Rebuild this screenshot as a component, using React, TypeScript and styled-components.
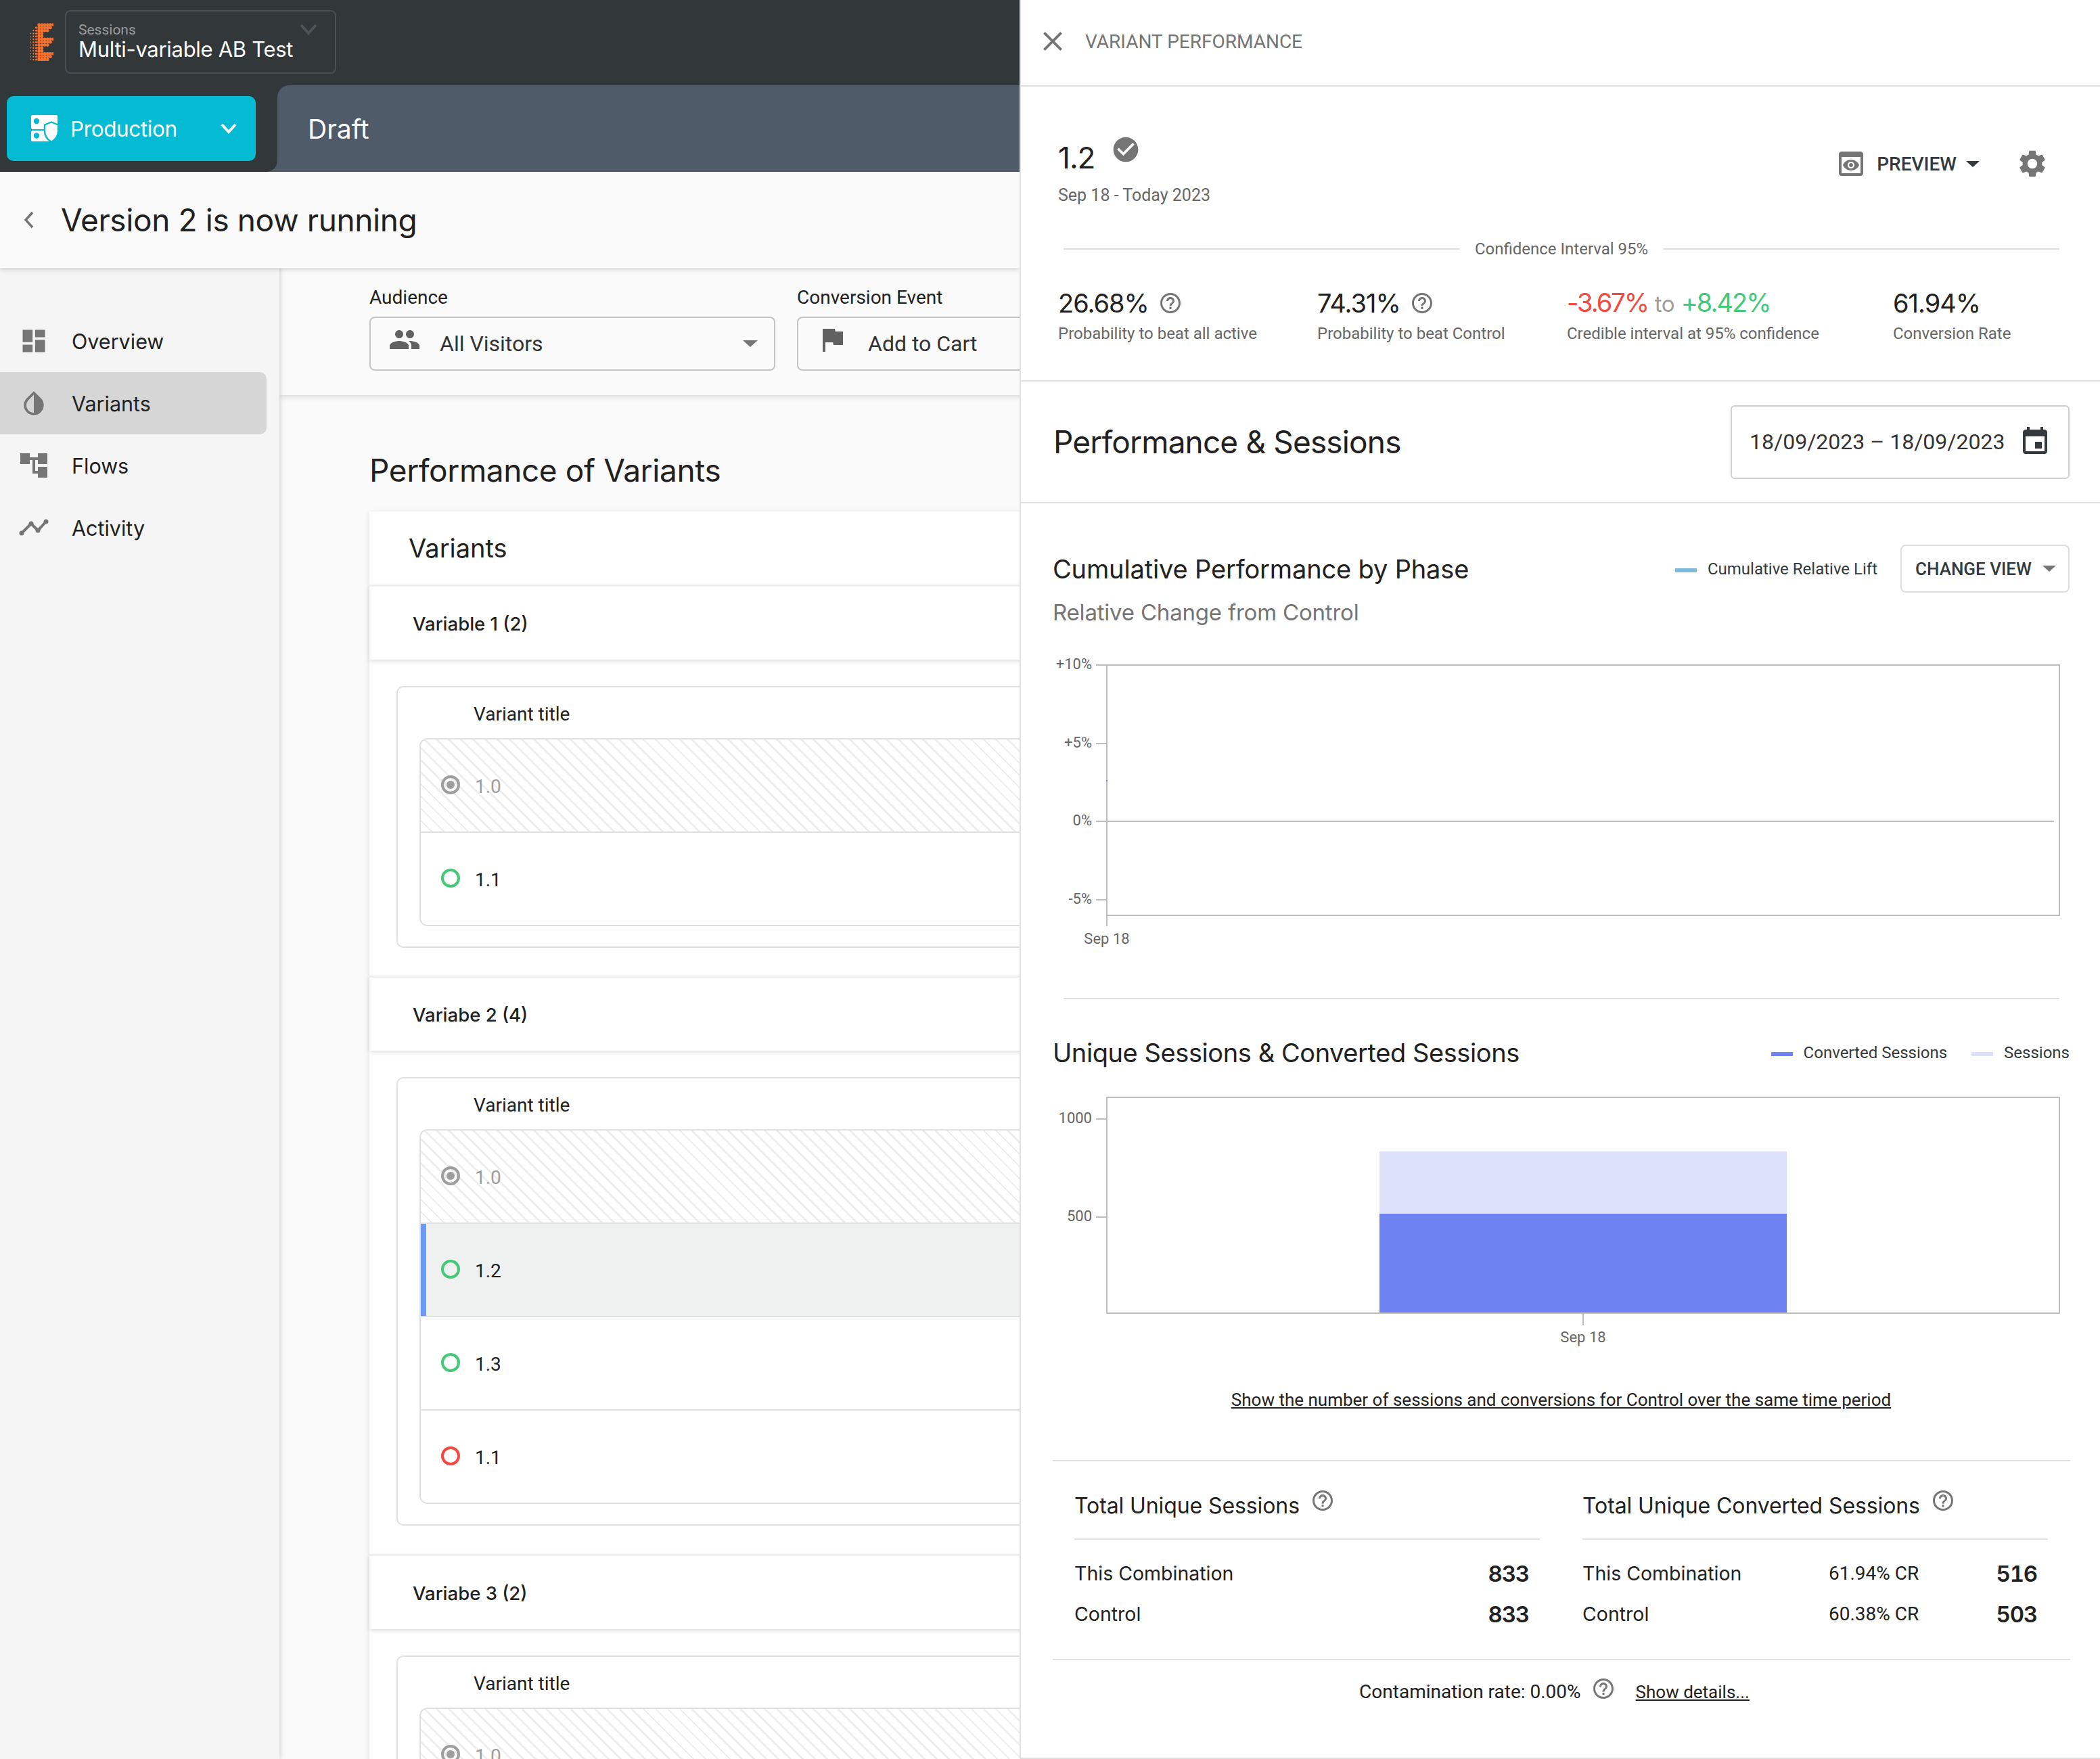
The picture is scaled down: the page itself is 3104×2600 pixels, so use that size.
import React from "react";
import styled, { createGlobalStyle } from "styled-components";

const ROBOTO = `Roboto, "Liberation Sans", sans-serif`;
const HEAD = `Inter, "Noto Sans", sans-serif`;

const Global = createGlobalStyle`
  html, body { margin: 0; padding: 0; background: #fff; }
  #root { width: 3104px; height: 2600px; overflow: hidden; }
  * { box-sizing: border-box; }
`;

const Page = styled.div`
  display: flex; width: 3104px; height: 2600px; overflow: hidden; font-family: ${ROBOTO}; color: #212121;
`;
const LeftColumn = styled.div`
  width: 1507px; flex: none; display: flex; flex-direction: column; overflow: hidden; background: #fafafa;
`;
const TopBar = styled.header`
  height: 126px; flex: none; background: #32373a; display: flex; align-items: flex-start; padding: 15px 0 0 44px; gap: 17px;
`;
const LogoSvg = styled.svg`
  width: 35px; height: 56px; margin-top: 19px; flex: none;
`;
const SessionBox = styled.div`
  width: 401px; height: 94px; border: 2px solid #4a4f53; border-radius: 8px; padding: 15px 18px 0; position: relative;
  display: flex; flex-direction: column;
`;
const SessionLabel = styled.span`
  font-size: 21px; line-height: 24px; color: #9a9da0;
`;
const SessionName = styled.span`
  font-family: ${HEAD}; font-size: 31px; line-height: 34px; color: #fff; letter-spacing: -0.3px; white-space: nowrap;
`;
const SessionChevron = styled.svg`
  position: absolute; right: 26px; top: 17px; width: 26px; height: 18px;
`;
const TabRow = styled.div`
  height: 128px; flex: none; display: flex; background: #32373a;
`;
const ProductionWrap = styled.div`
  width: 410px; flex: none; padding: 16px 32px 16px 10px;
`;
const ProductionButton = styled.div`
  height: 96px; width: 368px; background: #04bbd3; border-radius: 10px; display: flex; align-items: center; padding: 0 27px 0 36px; color: #fff;
`;
const ProductionLabel = styled.span`
  font-family: ${HEAD}; font-size: 31.5px; margin-left: 18px; flex: 1; letter-spacing: -0.4px;
`;
const DraftTab = styled.div`
  flex: 1; background: #4f5b69; border-top-left-radius: 18px; position: relative; display: flex; align-items: center; padding-left: 45px;
  font-family: ${HEAD}; font-size: 39px; color: #fff;
  &::before {
    content: ""; position: absolute; left: -16px; bottom: 0; width: 16px; height: 16px;
    background: radial-gradient(circle at 0 0, transparent 15.5px, #4f5b69 16px);
  }
`;
const SubHeader = styled.div`
  height: 142px; flex: none; background: #fafafa; display: flex; align-items: center; padding-left: 32px; gap: 38px;
  box-shadow: 0 3px 7px rgba(0,0,0,.13); position: relative; z-index: 3;
`;
const PageTitle = styled.h1`
  margin: 0; font-family: ${HEAD}; font-weight: 400; font-size: 46px; letter-spacing: -0.4px; color: #212121; white-space: nowrap;
`;
const Content = styled.div`
  flex: 1; display: flex; min-height: 0;
`;
const Sidebar = styled.nav`
  width: 413px; flex: none; background: #f5f5f5; padding-top: 62px; padding-right: 19px;
  box-shadow: 2px 0 6px rgba(0,0,0,.14); position: relative; z-index: 2;
`;
const NavItem = styled.div<{ $active?: boolean }>`
  height: 92px; display: flex; align-items: center; padding-left: 28px; gap: 34px;
  background: ${p => (p.$active ? "#d6d6d6" : "transparent")};
  border-radius: 0 10px 10px 0;
  font-family: ${HEAD}; font-size: 30.5px; color: #212121;
`;
const NavIcon = styled.span`
  width: 44px; height: 44px; display: flex; align-items: center; justify-content: center; flex: none; color: #757575;
`;
const Main = styled.main`
  flex: 1; min-width: 0; overflow: hidden; background: #fafafa;
`;
const FilterBar = styled.div`
  height: 188px; background: #fafafa; display: flex; gap: 32px; padding: 27px 0 0 133px;
  box-shadow: 0 3px 7px rgba(0,0,0,.12); width: 1200px;
`;
const FilterField = styled.div<{ $w: number }>`
  width: ${p => p.$w}px; flex: none;
`;
const FieldLabel = styled.div`
  font-size: 28px; line-height: 34px; color: #212121; margin-bottom: 11px;
`;
const Select = styled.div`
  height: 80px; border: 2px solid #c4c4c4; border-radius: 8px; display: flex; align-items: center; padding-left: 26px; font-size: 32px; color: #333;
`;
const SelectIcon = styled.span`
  display: flex; margin-top: -12px; flex: none;
`;
const SelectText = styled.span<{ $gap: number }>`
  margin-left: ${p => p.$gap}px; flex: 1;
`;
const Caret = styled.span<{ $w?: number; $c?: string }>`
  width: 0; height: 0; flex: none; display: inline-block;
  border-left: ${p => (p.$w ?? 11)}px solid transparent; border-right: ${p => (p.$w ?? 11)}px solid transparent;
  border-top: ${p => Math.round((p.$w ?? 11) * 0.9)}px solid ${p => p.$c ?? "#757575"};
`;
const SelectCaret = styled(Caret)`
  margin-right: 24px;
`;
const MainInner = styled.div`
  padding: 83px 0 0 133px;
`;
const SectionHeading = styled.h2`
  margin: 0 0 33px; font-family: ${HEAD}; font-weight: 400; font-size: 46px; line-height: 56px; letter-spacing: -0.4px; color: #212121;
`;
const Card = styled.div`
  width: 1100px; background: #fff; box-shadow: 0 2px 8px rgba(0,0,0,.12);
`;
const CardTitle = styled.div`
  height: 108px; display: flex; align-items: center; padding-left: 58px; font-family: ${HEAD}; font-size: 38px; color: #212121;
`;
const GroupHeader = styled.div`
  height: 111px; border-top: 3px solid #eeeeee; display: flex; align-items: center; padding: 2px 0 0 64px;
  font-family: ${HEAD}; font-weight: 500; font-size: 27.5px; color: #212121; background: #fff;
  box-shadow: 0 3px 6px rgba(0,0,0,.12); position: relative;
`;
const GroupBody = styled.div<{ $top: number; $bottom: number }>`
  padding: ${p => p.$top}px 0 ${p => p.$bottom}px 40px;
`;
const InnerBox = styled.div`
  width: 1100px; border: 2px solid #e0e0e0; border-radius: 10px; padding: 23px 0 30px 32px;
`;
const VariantTitle = styled.div`
  font-size: 28px; line-height: 34px; padding-left: 80px; margin-bottom: 18px; color: #212121;
`;
const Table = styled.div`
  border: 2px solid #e0e0e0; border-radius: 12px 0 0 12px; overflow: hidden;
`;
const Row = styled.div<{ $kind?: "base" | "selected" }>`
  height: 138px; display: flex; align-items: center; padding: 2px 0 0 30px; gap: 22px;
  border-top: 2px solid #e0e0e0; font-size: 28px; position: relative;
  color: ${p => (p.$kind === "base" ? "#9e9e9e" : "#212121")};
  background: ${p =>
    p.$kind === "base"
      ? "repeating-linear-gradient(45deg, #fff 0, #fff 10px, #eeeeee 10px, #eeeeee 12.7px)"
      : p.$kind === "selected"
      ? "#eff1f0"
      : "#fff"};
  &:first-child { border-top: 0; height: 136px; }
  ${p => p.$kind === "selected" ? `&::before { content: ""; position: absolute; left: 0; top: 0; bottom: 0; width: 8px; background: #6b9af5; }` : ""}
`;
const Radio = styled.span<{ $c: string }>`
  width: 28px; height: 28px; border-radius: 50%; border: 4px solid ${p => p.$c}; flex: none; margin-top: -5px; position: relative;
`;
const BaseRadio = styled(Radio)`
  display: flex; align-items: center; justify-content: center;
  &::after { content: ""; width: 12px; height: 12px; border-radius: 50%; background: #9e9e9e; }
`;

/* Panel */
const Panel = styled.aside`
  flex: 1; min-width: 0; background: #fff; border-left: 2px solid #e0e0e0; display: flex; flex-direction: column; border-bottom: 2px solid #e0e0e0;
`;
const PanelHeader = styled.div`
  height: 128px; flex: none; border-bottom: 2px solid #e0e0e0; display: flex; align-items: center; padding: 0 0 4px 23px; gap: 24px;
  font-size: 28px; color: #757575;
`;
const Summary = styled.section`
  flex: none; height: 436px; border-bottom: 2px solid #e0e0e0; padding-top: 77px;
`;
const SummaryTop = styled.div`
  display: flex; justify-content: space-between; align-items: flex-start; padding: 0 76px 0 55px;
`;
const VersionLine = styled.div`
  display: flex; align-items: flex-start; gap: 24px; font-family: ${HEAD}; font-size: 44px; line-height: 56px; color: #212121; letter-spacing: -1px;
`;
const CheckWrap = styled.span`
  margin-top: -6px; color: #757575; display: flex;
`;
const DateLine = styled.div`
  margin-top: 11px; font-size: 25px; line-height: 34px; color: #666;
`;
const Actions = styled.div`
  display: flex; align-items: center; margin-top: 13px; color: #757575;
`;
const PreviewText = styled.span`
  margin-left: 14px; margin-right: 14px; font-size: 28px; font-weight: 500; color: #333a3d;
`;
const GearWrap = styled.span`
  margin-left: 54px; display: flex;
`;
const ConfidenceRow = styled.div`
  margin-top: 45px; display: flex; align-items: center; gap: 22px; padding: 0 60px 0 63px; font-size: 24px; line-height: 34px; color: #666;
`;
const Rule = styled.span`
  flex: 1; height: 2px; background: #e0e0e0;
`;
const Stats = styled.div`
  margin-top: 39px; display: flex; padding-left: 55px;
`;
const Stat = styled.div<{ $w: number }>`
  width: ${p => p.$w}px; flex: none;
`;
const StatValue = styled.div`
  height: 48px; display: flex; align-items: center; gap: 14px; font-family: ${HEAD}; font-size: 38px; line-height: 48px; letter-spacing: -1px; color: #212121; white-space: nowrap;
`;
const Tone = styled.span<{ $c: string }>`
  color: ${p => p.$c}; letter-spacing: -2px;
`;
const ToneTo = styled.span`
  color: #9e9e9e; font-size: 33px; letter-spacing: -0.5px;
`;
const StatLabel = styled.div`
  margin-top: 5px; font-size: 24px; line-height: 32px; color: #666; white-space: nowrap;
`;
const HelpWrap = styled.span`
  display: inline-flex; color: #757575; flex: none;
`;
const PerfBar = styled.section`
  height: 180px; flex: none; border-bottom: 2px solid #e0e0e0; display: flex; align-items: center; justify-content: space-between; padding: 0 45px 0 48px;
`;
const PerfTitle = styled.h2`
  margin: 0; font-family: ${HEAD}; font-weight: 400; font-size: 46px; letter-spacing: -0.85px; color: #212121;
`;
const DateBox = styled.div`
  width: 501px; height: 109px; border: 2px solid #cfcfcf; border-radius: 6px; display: flex; align-items: center; justify-content: space-between; padding: 0 25px 0 26px;
  font-size: 32px; color: #333;
`;
const ChartSection = styled.section`
  padding: 61px 45px 0 47px;
`;
const ChartHead = styled.div`
  height: 71px; display: flex; align-items: center; justify-content: space-between;
`;
const ChartTitle = styled.h3<{ $ls: number }>`
  margin: 0; font-family: ${HEAD}; font-weight: 400; font-size: 38px; letter-spacing: ${p => p.$ls}px; color: #212121; white-space: nowrap;
`;
const Legend = styled.div`
  display: flex; align-items: center; font-size: 24px; color: #333a3d; white-space: nowrap;
`;
const Swatch = styled.span<{ $c: string; $ml?: number }>`
  width: 32px; height: 6px; background: ${p => p.$c}; margin: 4px 16px 0 ${p => p.$ml ?? 0}px; flex: none;
`;
const ChangeView = styled.div`
  width: 250px; height: 71px; margin-left: 34px; border: 2px solid #dedede; border-radius: 8px; display: flex; align-items: center; justify-content: space-between; padding: 0 18px 0 20px;
  font-size: 26px; font-weight: 500; color: #333a3d;
`;
const ChartSub = styled.div`
  margin-top: 7px; font-family: ${HEAD}; font-size: 33px; line-height: 44px; letter-spacing: -0.2px; color: #757575;
`;
const ChartSvg = styled.svg<{ $top: number }>`
  display: block; margin-top: ${p => p.$top}px; overflow: visible;
  text { font-family: ${ROBOTO}; font-size: 22px; fill: #666; }
`;
const SectionRule = styled.div`
  height: 2px; background: #e0e0e0; margin: 75px 15px 53px 16px;
`;
const UniqueHead = styled.div`
  height: 52px; display: flex; align-items: center; justify-content: space-between;
`;
const LinkLine = styled.div`
  margin-top: 50px; text-align: center; font-size: 26px; line-height: 36px; text-decoration: underline; color: #212121;
`;
const Totals = styled.section`
  margin: 71px 44px 0 47px; border-top: 2px solid #e0e0e0; border-bottom: 2px solid #e0e0e0; padding: 44px 33px 28px 32px; display: grid; grid-template-columns: 1fr 1fr; column-gap: 63px;
`;
const TotalHead = styled.div`
  height: 72px; border-bottom: 2px solid #e0e0e0; display: flex; align-items: flex-start; gap: 16px; font-family: ${HEAD}; font-size: 32px; line-height: 44px; letter-spacing: -0.1px; color: #212121;
`;
const HeadHelp = styled(HelpWrap)`
  margin-top: -4px;
`;
const TotalRows = styled.div`
  padding-top: 28px; padding-right: 16px;
`;
const TotalRow = styled.div`
  height: 60px; display: flex; align-items: flex-start; font-family: ${HEAD}; font-size: 28.5px; line-height: 44px; color: #212121;
`;
const RowLabel = styled.span<{ $w?: number }>`
  ${p => (p.$w ? `width: ${p.$w}px; flex: none;` : "flex: 1;")}
`;
const RowCr = styled.span`
  flex: 1; font-family: ${ROBOTO}; font-size: 28px;
`;
const RowValue = styled.span`
  font-size: 33px; font-weight: 600; letter-spacing: -1.2px; text-align: right; font-feature-settings: "tnum";
`;
const ContamRow = styled.div`
  margin-top: 27px; display: flex; align-items: center; justify-content: center; padding-right: 18px; font-size: 28px; line-height: 40px; color: #212121;
`;
const ContamHelp = styled(HelpWrap)`
  margin: -10px 0 0 15px;
`;
const DetailsLink = styled.span`
  margin-left: 30px; text-decoration: underline; font-size: 26px;
`;

/* Icons */
const Icon: React.FC<{ d: string; size: number; fill?: string }> = ({ d, size, fill = "currentColor" }) => (
  <svg width={size} height={size} viewBox="0 0 24 24" fill={fill}><path d={d} /></svg>
);
const HELP = "M11 18h2v-2h-2v2zm1-16C6.48 2 2 6.48 2 12s4.48 10 10 10 10-4.48 10-10S17.52 2 12 2zm0 18c-4.41 0-8-3.59-8-8s3.59-8 8-8 8 3.59 8 8-3.59 8-8 8zm0-14c-2.21 0-4 1.79-4 4h2c0-1.1.9-2 2-2s2 .9 2 2c0 2-3 1.75-3 5h2c0-2.25 3-2.5 3-5 0-2.21-1.79-4-4-4z";
const CHECK = "M12 2C6.48 2 2 6.48 2 12s4.48 10 10 10 10-4.48 10-10S17.52 2 12 2zm-2 15l-5-5 1.41-1.41L10 14.17l7.59-7.59L19 8l-9 9z";
const CLOSE = "M19 6.41L17.59 5 12 10.59 6.41 5 5 6.41 10.59 12 5 17.59 6.41 19 12 13.41 17.59 19 19 17.59 13.41 12z";
const DASH = "M3 13h8V3H3v10zm0 8h8v-6H3v6zm10 0h8V11h-8v10zm0-18v6h8V3h-8z";
const DROP = "M17.66 7.93L12 2.27 6.34 7.93c-3.12 3.12-3.12 8.19 0 11.31C7.9 20.8 9.95 21.58 12 21.58c2.05 0 4.1-.78 5.66-2.34 3.12-3.12 3.12-8.19 0-11.31zM12 19.59c-1.6 0-3.11-.62-4.24-1.76C6.62 16.69 6 15.19 6 13.59s.62-3.11 1.76-4.24L12 5.1v14.49z";
const PEOPLE = "M16 11c1.66 0 2.99-1.34 2.99-3S17.66 5 16 5c-1.66 0-3 1.34-3 3s1.34 3 3 3zm-8 0c1.66 0 2.99-1.34 2.99-3S9.66 5 8 5C6.34 5 5 6.34 5 8s1.34 3 3 3zm0 2c-2.33 0-7 1.17-7 3.5V19h14v-2.5c0-2.33-4.67-3.5-7-3.5zm8 0c-.29 0-.62.02-.97.05 1.16.84 1.97 1.97 1.97 3.45V19h6v-2.5c0-2.33-4.67-3.5-7-3.5z";
const FLAG = "M14.4 6L14 4H5v17h2v-7h5.6l.4 2h7V6z";
const SETTINGS = "M19.14 12.94c.04-.3.06-.61.06-.94 0-.32-.02-.64-.07-.94l2.03-1.58c.18-.14.23-.41.12-.61l-1.92-3.32c-.12-.22-.37-.29-.59-.22l-2.39.96c-.5-.38-1.03-.7-1.62-.94l-.36-2.54c-.04-.24-.24-.41-.48-.41h-3.84c-.24 0-.43.17-.47.41l-.36 2.54c-.59.24-1.13.57-1.62.94l-2.39-.96c-.22-.08-.47 0-.59.22L2.74 8.87c-.12.21-.08.47.12.61l2.03 1.58c-.05.3-.09.63-.09.94s.02.64.07.94l-2.03 1.58c-.18.14-.23.41-.12.61l1.92 3.32c.12.22.37.29.59.22l2.39-.96c.5.38 1.03.7 1.62.94l.36 2.54c.05.24.24.41.48.41h3.84c.24 0 .44-.17.47-.41l.36-2.54c.59-.24 1.13-.56 1.62-.94l2.39.96c.22.08.47 0 .59-.22l1.92-3.32c.12-.22.07-.47-.12-.61l-2.01-1.58zM12 15.6c-1.98 0-3.6-1.62-3.6-3.6s1.62-3.6 3.6-3.6 3.6 1.62 3.6 3.6-1.62 3.6-3.6 3.6z";
const EVENT = "M17 12h-5v5h5v-5zM16 1v2H8V1H6v2H5c-1.11 0-1.99.9-1.99 2L3 19c0 1.1.89 2 2 2h14c1.1 0 2-.9 2-2V5c0-1.1-.9-2-2-2h-1V1h-2zm3 18H5V8h14v11z";
const PREVIEW = "M19 3H5c-1.11 0-2 .9-2 2v14c0 1.1.89 2 2 2h14c1.1 0 2-.9 2-2V5c0-1.1-.89-2-2-2zm0 16H5V7h14v12zm-5.5-6c0 .83-.67 1.5-1.5 1.5s-1.5-.67-1.5-1.5.67-1.5 1.5-1.5 1.5.67 1.5 1.5zM12 9c-2.73 0-5.06 1.66-6 4 .94 2.34 3.27 4 6 4s5.06-1.66 6-4c-.94-2.34-3.27-4-6-4zm0 6.5c-1.38 0-2.5-1.12-2.5-2.5s1.12-2.5 2.5-2.5 2.5 1.12 2.5 2.5-1.12 2.5-2.5 2.5z";

const Logo = () => {
  const starts = [3, 2, 1, 0, 0, 0, 0, 0, 0, 0, 0, 0, 0];
  const ends = [8, 7, 6, 4, 4, 8, 7, 6, 4, 4, 8, 7, 6];
  const radius = [0.9, 1.2, 1.6, 2.5];
  return (
    <LogoSvg viewBox="0 0 36 57" fill="#f6702e">
      {starts.flatMap((s, r) =>
        Array.from({ length: ends[r] - s + 1 }, (_, i) => {
          const c = s + i;
          return <circle key={`${r}-${c}`} cx={1.2 + c * 4.3} cy={2.4 + r * 4.4} r={radius[Math.min(c, 3)]} />;
        })
      )}
    </LogoSvg>
  );
};

const ProductionIcon = () => (
  <svg width="40" height="40" viewBox="0 0 40 40">
    <rect x="0" y="0" width="39" height="21" rx="2" fill="#fff" />
    <circle cx="8" cy="9" r="4.2" fill="#04bbd3" />
    <rect x="0" y="23" width="28" height="16" rx="2" fill="#fff" />
    <circle cx="8" cy="30.5" r="4.2" fill="#04bbd3" />
    <path fill="#fff" stroke="#04bbd3" strokeWidth="2.4" d="M30 10.5L40 14.5V24C40 31 35.5 36.5 30 39.5 24.5 36.5 20 31 20 24V14.5Z" />
  </svg>
);

const FlowIcon = () => (
  <svg width="40" height="36" viewBox="0 0 40 36" fill="#757575">
    <rect x="0" y="0" width="14" height="16" />
    <rect x="26" y="0" width="14" height="16" />
    <rect x="26" y="20" width="14" height="16" />
    <rect x="14" y="6" width="12" height="4" />
    <rect x="18" y="6" width="4" height="24" />
    <rect x="18" y="26" width="8" height="4" />
  </svg>
);

const ActivityIcon = () => (
  <svg width="44" height="26" viewBox="0 0 44 26" fill="#757575" stroke="#757575">
    <polyline points="4,21 18,7 28,17 40,4" fill="none" strokeWidth="4" />
    <circle cx="4" cy="21" r="3.5" stroke="none" />
    <circle cx="18" cy="7" r="3.5" stroke="none" />
    <circle cx="28" cy="17" r="3.5" stroke="none" />
    <circle cx="40" cy="4" r="3.5" stroke="none" />
  </svg>
);

const VariantRows: React.FC<{ rows: { label: string; color: string; selected?: boolean }[] }> = ({ rows }) => (
  <InnerBox>
    <VariantTitle>Variant title</VariantTitle>
    <Table>
      <Row $kind="base"><BaseRadio $c="#9e9e9e" />1.0</Row>
      {rows.map(r => (
        <Row key={r.label + r.color} $kind={r.selected ? "selected" : undefined}>
          <Radio $c={r.color} />{r.label}
        </Row>
      ))}
    </Table>
  </InnerBox>
);

const GREEN = "#43c978";
const RED = "#f4493f";

const Tick: React.FC<{ y: number; label: string }> = ({ y, label }) => (
  <>
    <line x1="63" x2="79" y1={y} y2={y} stroke="#bdbdbd" strokeWidth="2" />
    <text x="57" y={y + 6} textAnchor="end">{label}</text>
  </>
);

export default function App() {
  return (
    <Page>
      <Global />
      <LeftColumn>
        <TopBar>
          <Logo />
          <SessionBox>
            <SessionLabel>Sessions</SessionLabel>
            <SessionName>Multi-variable AB Test</SessionName>
            <SessionChevron viewBox="0 0 26 18" fill="none" stroke="#4e5357" strokeWidth="4"><polyline points="2,3 13,15 24,3" /></SessionChevron>
          </SessionBox>
        </TopBar>
        <TabRow>
          <ProductionWrap>
            <ProductionButton>
              <ProductionIcon />
              <ProductionLabel>Production</ProductionLabel>
              <svg width="26" height="18" viewBox="0 0 26 18" fill="none" stroke="#fff" strokeWidth="4"><polyline points="3,3 13,14 23,3" /></svg>
            </ProductionButton>
          </ProductionWrap>
          <DraftTab>Draft</DraftTab>
        </TabRow>
        <SubHeader>
          <svg width="20" height="28" viewBox="0 0 20 28" fill="none" stroke="#757575" strokeWidth="3.5"><polyline points="16,3 6,14 16,25" /></svg>
          <PageTitle>Version 2 is now running</PageTitle>
        </SubHeader>
        <Content>
          <Sidebar>
            <NavItem><NavIcon><Icon d={DASH} size={48} /></NavIcon>Overview</NavItem>
            <NavItem $active><NavIcon><Icon d={DROP} size={48} /></NavIcon>Variants</NavItem>
            <NavItem><NavIcon><FlowIcon /></NavIcon>Flows</NavItem>
            <NavItem><NavIcon><ActivityIcon /></NavIcon>Activity</NavItem>
          </Sidebar>
          <Main>
            <FilterBar>
              <FilterField $w={600}>
                <FieldLabel>Audience</FieldLabel>
                <Select>
                  <SelectIcon><Icon d={PEOPLE} size={48} fill="#616161" /></SelectIcon>
                  <SelectText $gap={28}>All Visitors</SelectText>
                  <SelectCaret />
                </Select>
              </FilterField>
              <FilterField $w={700}>
                <FieldLabel>Conversion Event</FieldLabel>
                <Select>
                  <SelectIcon><Icon d={FLAG} size={48} fill="#616161" /></SelectIcon>
                  <SelectText $gap={29}>Add to Cart</SelectText>
                </Select>
              </FilterField>
            </FilterBar>
            <MainInner>
              <SectionHeading>Performance of Variants</SectionHeading>
              <Card>
                <CardTitle>Variants</CardTitle>
                <GroupHeader>Variable 1 (2)</GroupHeader>
                <GroupBody $top={39} $bottom={41}>
                  <VariantRows rows={[{ label: "1.1", color: GREEN }]} />
                </GroupBody>
                <GroupHeader>Variabe 2 (4)</GroupHeader>
                <GroupBody $top={39} $bottom={42}>
                  <VariantRows rows={[
                    { label: "1.2", color: GREEN, selected: true },
                    { label: "1.3", color: GREEN },
                    { label: "1.1", color: RED },
                  ]} />
                </GroupBody>
                <GroupHeader>Variabe 3 (2)</GroupHeader>
                <GroupBody $top={39} $bottom={39}>
                  <VariantRows rows={[]} />
                </GroupBody>
              </Card>
            </MainInner>
          </Main>
        </Content>
      </LeftColumn>

      <Panel>
        <PanelHeader>
          <Icon d={CLOSE} size={48} fill="#757575" />
          VARIANT PERFORMANCE
        </PanelHeader>
        <Summary>
          <SummaryTop>
            <div>
              <VersionLine>1.2<CheckWrap><Icon d={CHECK} size={44} /></CheckWrap></VersionLine>
              <DateLine>Sep 18 - Today 2023</DateLine>
            </div>
            <Actions>
              <Icon d={PREVIEW} size={48} />
              <PreviewText>PREVIEW</PreviewText>
              <Caret $w={10} $c="#333a3d" />
              <GearWrap><Icon d={SETTINGS} size={48} /></GearWrap>
            </Actions>
          </SummaryTop>
          <ConfidenceRow><Rule />Confidence Interval 95%<Rule /></ConfidenceRow>
          <Stats>
            <Stat $w={383}>
              <StatValue>26.68%<HelpWrap><Icon d={HELP} size={36} /></HelpWrap></StatValue>
              <StatLabel>Probability to beat all active</StatLabel>
            </Stat>
            <Stat $w={369}>
              <StatValue>74.31%<HelpWrap><Icon d={HELP} size={36} /></HelpWrap></StatValue>
              <StatLabel>Probability to beat Control</StatLabel>
            </Stat>
            <Stat $w={482}>
              <StatValue><span><Tone $c={RED}>-3.67%</Tone> <ToneTo>to</ToneTo> <Tone $c={GREEN}>+8.42%</Tone></span></StatValue>
              <StatLabel>Credible interval at 95% confidence</StatLabel>
            </Stat>
            <Stat $w={260}>
              <StatValue>61.94%</StatValue>
              <StatLabel>Conversion Rate</StatLabel>
            </Stat>
          </Stats>
        </Summary>
        <PerfBar>
          <PerfTitle>Performance &amp; Sessions</PerfTitle>
          <DateBox>18/09/2023 – 18/09/2023<Icon d={EVENT} size={48} fill="#333a3d" /></DateBox>
        </PerfBar>
        <ChartSection>
          <ChartHead>
            <ChartTitle $ls={-0.15}>Cumulative Performance by Phase</ChartTitle>
            <Legend>
              <Swatch $c="#7fb9de" />Cumulative Relative Lift
              <ChangeView>CHANGE VIEW<Caret $w={10} /></ChangeView>
            </Legend>
          </ChartHead>
          <ChartSub>Relative Change from Control</ChartSub>
          <ChartSvg $top={33} width="1504" height="440" viewBox="-1 0 1504 440">
            <rect x="79" y="23" width="1408" height="370" fill="none" stroke="#bdbdbd" strokeWidth="2" />
            <Tick y={23} label="+10%" />
            <Tick y={139} label="+5%" />
            <Tick y={254} label="0%" />
            <Tick y={370} label="-5%" />
            <line x1="79" x2="1479" y1="254" y2="254" stroke="#bdbdbd" strokeWidth="2" />
            <line x1="79" x2="79" y1="393" y2="409" stroke="#bdbdbd" strokeWidth="2" />
            <circle cx="79" cy="194" r="1.2" fill="#6f82f2" />
            <text x="79" y="435" textAnchor="middle">Sep 18</text>
          </ChartSvg>
          <SectionRule />
          <UniqueHead>
            <ChartTitle $ls={-0.42}>Unique Sessions &amp; Converted Sessions</ChartTitle>
            <Legend>
              <Swatch $c="#6f82f2" />Converted Sessions
              <Swatch $c="#dde1fb" $ml={36} />Sessions
            </Legend>
          </UniqueHead>
          <ChartSvg $top={19} width="1504" height="400" viewBox="-1 0 1504 400">
            <rect x="482" y="101" width="602" height="92" fill="#dde1fb" />
            <rect x="482" y="193" width="602" height="147" fill="#6f82f2" />
            <rect x="79" y="21" width="1408" height="319" fill="none" stroke="#bdbdbd" strokeWidth="2" />
            <Tick y={53} label="1000" />
            <Tick y={198} label="500" />
            <line x1="783" x2="783" y1="340" y2="358" stroke="#bdbdbd" strokeWidth="2" />
            <text x="783" y="383" textAnchor="middle">Sep 18</text>
          </ChartSvg>
          <LinkLine>Show the number of sessions and conversions for Control over the same time period</LinkLine>
        </ChartSection>
        <Totals>
          <div>
            <TotalHead>Total Unique Sessions<HeadHelp><Icon d={HELP} size={36} /></HeadHelp></TotalHead>
            <TotalRows>
              <TotalRow><RowLabel>This Combination</RowLabel><RowValue>833</RowValue></TotalRow>
              <TotalRow><RowLabel>Control</RowLabel><RowValue>833</RowValue></TotalRow>
            </TotalRows>
          </div>
          <div>
            <TotalHead>Total Unique Converted Sessions<HeadHelp><Icon d={HELP} size={36} /></HeadHelp></TotalHead>
            <TotalRows>
              <TotalRow><RowLabel $w={364}>This Combination</RowLabel><RowCr>61.94% CR</RowCr><RowValue>516</RowValue></TotalRow>
              <TotalRow><RowLabel $w={364}>Control</RowLabel><RowCr>60.38% CR</RowCr><RowValue>503</RowValue></TotalRow>
            </TotalRows>
          </div>
        </Totals>
        <ContamRow>
          Contamination rate: 0.00%
          <ContamHelp><Icon d={HELP} size={36} /></ContamHelp>
          <DetailsLink>Show details...</DetailsLink>
        </ContamRow>
      </Panel>
    </Page>
  );
}
